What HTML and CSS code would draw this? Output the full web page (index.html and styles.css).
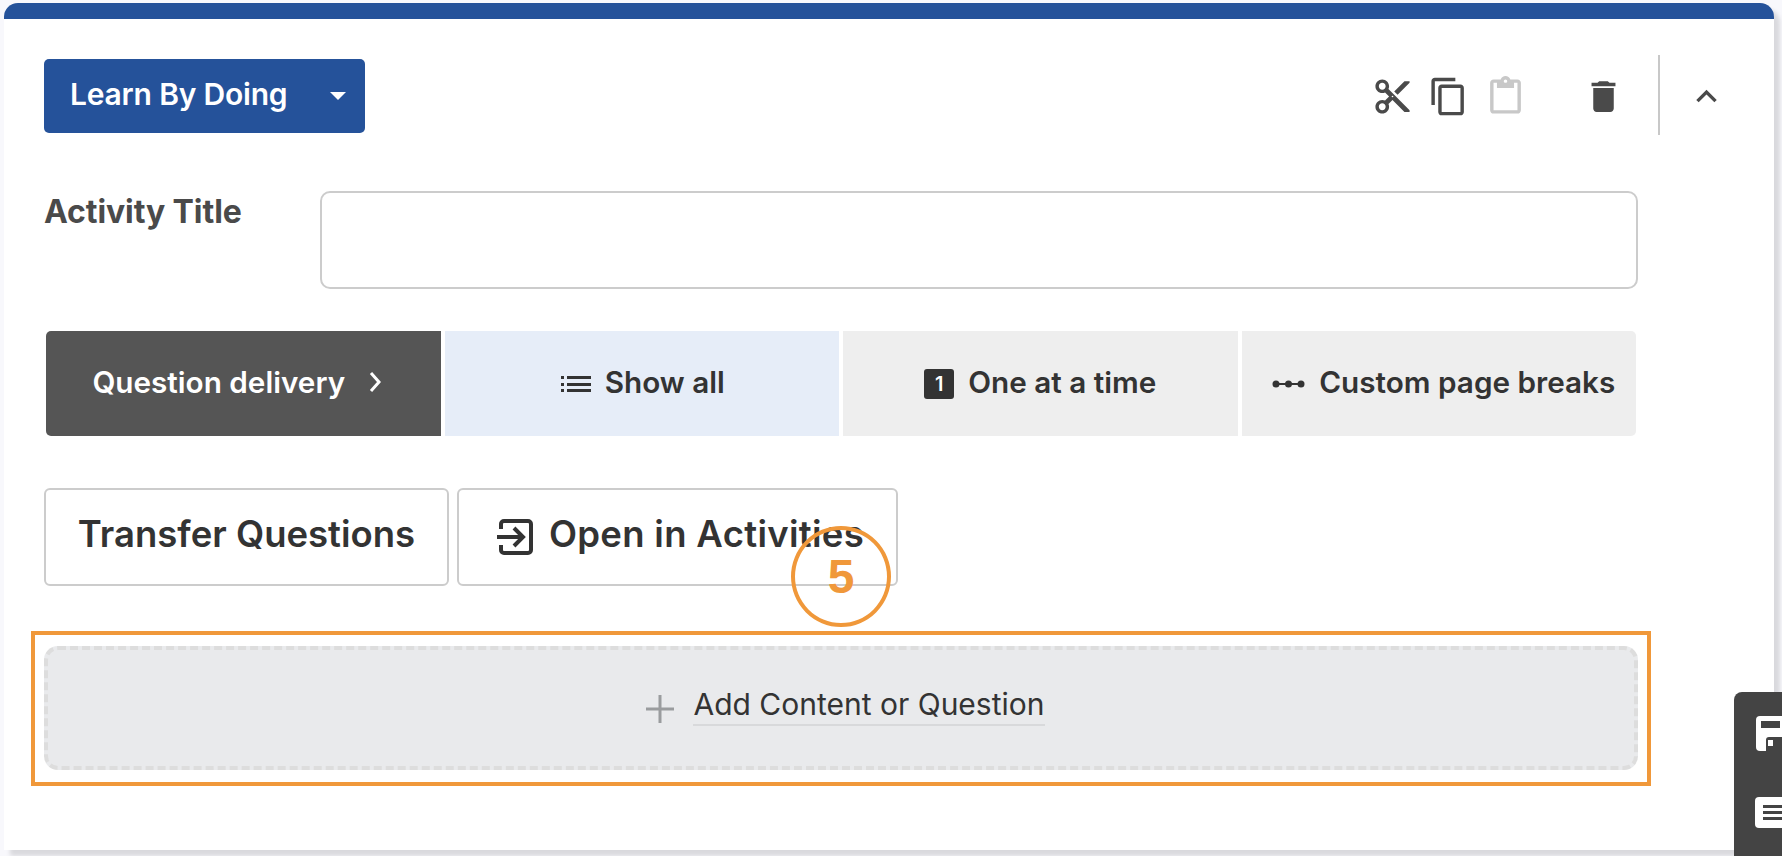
FILE: index.html
```html
<!DOCTYPE html>
<html lang="en">
  <head>
    <meta charset="UTF-8" />
    <meta name="viewport" content="width=device-width, initial-scale=1.0" />
    <title>Learn By Doing</title>
    <link rel="stylesheet" href="styles.css">
  </head>
  <body>
    <div class="card">
      <div class="card-header">
        <button class="type-btn" type="button">Learn By Doing<span class="caret"></span></button>
        <div class="tools">
          <svg class="tool tool-cut" viewBox="0 0 24 24"><path d="M9.64 7.64c.23-.5.36-1.05.36-1.64 0-2.21-1.79-4-4-4S2 3.79 2 6s1.79 4 4 4c.59 0 1.14-.13 1.64-.36L10 12l-2.36 2.36C7.14 14.13 6.59 14 6 14c-2.21 0-4 1.79-4 4s1.79 4 4 4 4-1.79 4-4c0-.59-.13-1.14-.36-1.64L12 14l7 7h3v-1L9.64 7.64zM6 8c-1.1 0-2-.89-2-2s.9-2 2-2 2 .89 2 2-.9 2-2 2zm0 12c-1.1 0-2-.89-2-2s.9-2 2-2 2 .89 2 2-.9 2-2 2zm6-7.5c-.28 0-.5-.22-.5-.5s.22-.5.5-.5.5.22.5.5-.22.5-.5.5zM19 3l-6 6 2 2 7-7V3z"/></svg>
          <svg class="tool tool-copy" viewBox="0 0 24 24"><path d="M16 1H4c-1.1 0-2 .9-2 2v14h2V3h12V1zm3 4H8c-1.1 0-2 .9-2 2v14c0 1.1.9 2 2 2h11c1.1 0 2-.9 2-2V7c0-1.1-.9-2-2-2zm0 16H8V7h11v14z"/></svg>
          <svg class="tool tool-paste" viewBox="0 0 24 24"><path d="M19 2h-4.18C14.4.84 13.3 0 12 0c-1.3 0-2.4.84-2.82 2H5c-1.1 0-2 .9-2 2v16c0 1.1.9 2 2 2h14c1.1 0 2-.9 2-2V4c0-1.1-.9-2-2-2zm-7 0c.55 0 1 .45 1 1s-.45 1-1 1-1-.45-1-1 .45-1 1-1zm7 18H5V4h2v3h10V4h2v16z"/></svg>
          <svg class="tool tool-trash" viewBox="0 0 24 24"><path d="M6 19c0 1.1.9 2 2 2h8c1.1 0 2-.9 2-2V7H6v12zM19 4h-3.5l-1-1h-5l-1 1H5v2h14V4z"/></svg>
          <div class="divider"></div>
          <svg class="tool tool-collapse" viewBox="0 0 24 24"><path d="M12 8l-6 6 1.41 1.41L12 10.83l4.59 4.58L18 14z"/></svg>
        </div>
      </div>

      <div class="title-row">
        <label class="title-label">Activity Title</label>
        <input class="title-input" type="text" />
      </div>

      <div class="delivery">
        <div class="seg seg-head">Question delivery
          <svg class="seg-chevron" viewBox="0 0 12 24"><path d="M2 3l8 9-8 9"/></svg>
        </div>
        <div class="seg seg-active">
          <svg class="seg-icon-list" viewBox="0 0 30 18">
            <rect x="0" y="1" width="3" height="3"/><rect x="0" y="8" width="3" height="3"/><rect x="0" y="14" width="3" height="3"/>
            <rect x="6" y="1" width="24" height="3"/><rect x="6" y="8" width="24" height="3"/><rect x="6" y="14" width="24" height="3"/>
          </svg>
          Show all
        </div>
        <div class="seg">
          <span class="seg-badge">1</span>
          One at a time
        </div>
        <div class="seg seg-breaks">
          <svg class="seg-icon-breaks" viewBox="0 0 33 12">
            <circle cx="4" cy="6" r="3.5"/><circle cx="16.5" cy="6" r="3.5"/><circle cx="29" cy="6" r="3.5"/>
            <rect x="4" y="5" width="25" height="2"/>
          </svg>
          Custom page breaks
        </div>
      </div>

      <div class="actions">
        <button class="action-btn btn-transfer" type="button">Transfer Questions</button>
        <button class="action-btn btn-open" type="button">
          <svg class="open-icon" viewBox="0 0 36 36"><path d="M4 10V5a3 3 0 0 1 3-3h24a3 3 0 0 1 3 3v26a3 3 0 0 1-3 3H7a3 3 0 0 1-3-3v-5M0 18h26M17 9l9 9-9 9"/></svg>
          Open in Activities
        </button>
      </div>

      <div class="add-wrap">
        <div class="add-box">
          <svg class="add-plus" viewBox="0 0 28 28"><path d="M12.5 0h3v12.5H28v3H15.5V28h-3V15.5H0v-3h12.5z"/></svg>
          <span class="add-text">Add Content or Question</span>
        </div>
        <div class="highlight"></div>
      </div>

      <div class="callout">5</div>
    </div>

    <div class="side-panel">
      <div class="side-save"><span class="save-slot"></span><span class="save-notch"><span class="save-pip"></span></span></div>
      <div class="side-list"><span></span><span></span><span></span></div>
    </div>
  </body>
</html>
```

FILE: styles.css
```css
html, body {
  margin: 0;
  height: 856px;
  overflow: hidden;
}
body {
  background: #f8f8fc;
  font-family: Inter, "Open Sans", sans-serif;
  color: #333;
  position: relative;
}
.card {
  position: relative;
  box-sizing: border-box;
  width: 1770px;
  height: 847px;
  margin: 3px 0 0 4px;
  padding: 0 136px 0 40px;
  background: #fff;
  border-top: 16px solid #25529a;
  border-radius: 14px 14px 0 0;
  box-shadow: 6px 6px 4px rgba(0, 0, 0, 0.12);
}
.card-header {
  display: flex;
  align-items: center;
  justify-content: space-between;
  height: 82px;
  margin-right: -96px;
  padding-top: 36px;
}
.type-btn {
  display: flex;
  align-items: center;
  justify-content: space-between;
  box-sizing: border-box;
  width: 321px;
  height: 74px;
  padding: 0 19px 4px 26px;
  background: #25529a;
  color: #fff;
  border: none;
  border-radius: 5px;
  font-family: inherit;
  font-size: 30px;
  font-weight: 600;
  letter-spacing: -0.2px;
}
.caret {
  width: 0;
  height: 0;
  margin-top: 4px;
  border-left: 8px solid transparent;
  border-right: 8px solid transparent;
  border-top: 8px solid #fff;
}
.tools {
  display: flex;
  align-items: center;
  margin-right: 7px;
}
.tool {
  width: 41px;
  height: 41px;
  fill: #4a4a4a;
}
.tool-copy { margin-left: 15px; }
.tool-paste { margin-left: 16px; fill: #c8c8c8; }
.tool-trash { margin-left: 57px; }
.tool-collapse { margin-left: 26px; }
.divider {
  width: 2px;
  height: 80px;
  margin: 0 0 2px 34px;
  background: #c8c8c8;
}
.title-row {
  display: flex;
  margin-top: 54px;
}
.title-label {
  width: 277px;
  padding-top: 1px;
  font-size: 32px;
  font-weight: 700;
  line-height: 40px;
  letter-spacing: -0.1px;
  color: #4a4a4a;
}
.title-input {
  box-sizing: border-box;
  width: 1318px;
  height: 98px;
  margin-left: -1px;
  border: 2px solid #ccc;
  border-radius: 10px;
  outline: none;
}
.delivery {
  display: grid;
  grid-template-columns: repeat(4, 1fr);
  gap: 4px;
  height: 105px;
  margin: 42px 2px 0 2px;
}
.seg {
  display: flex;
  align-items: center;
  justify-content: center;
  gap: 14px;
  padding-bottom: 4px;
  background: #eee;
  font-size: 29.7px;
  font-weight: 600;
  color: #333;
}
.seg-breaks {
  padding-left: 10px;
  border-radius: 0 5px 5px 0;
}
.seg-head {
  gap: 24px;
  padding-right: 13px;
  background: #555;
  color: #fff;
  border-radius: 5px 0 0 5px;
}
.seg-active {
  padding-left: 2px;
  background: #e6edf8;
}
.seg-chevron {
  width: 12px;
  height: 24px;
  fill: none;
  stroke: #fff;
  stroke-width: 3;
}
.seg-icon-list {
  width: 30px;
  height: 18px;
  margin-top: 4px;
  fill: #333;
}
.seg-badge {
  display: flex;
  align-items: center;
  justify-content: center;
  width: 30px;
  height: 30px;
  margin-top: 4px;
  background: #333;
  color: #fff;
  border-radius: 3px;
  font-size: 20px;
}
.seg-icon-breaks {
  width: 33px;
  height: 12px;
  margin-top: 4px;
  fill: #333;
}
.actions {
  display: flex;
  gap: 8px;
  margin-top: 52px;
}
.action-btn {
  display: flex;
  align-items: center;
  justify-content: center;
  box-sizing: border-box;
  height: 98px;
  padding: 0 0 6px;
  background: #fff;
  border: 2px solid #ccc;
  border-radius: 6px;
  font-family: inherit;
  font-size: 36.5px;
  font-weight: 600;
  color: #333;
}
.btn-transfer { width: 405px; }
.btn-open {
  width: 441px;
  padding-left: 6px;
  gap: 16px;
  letter-spacing: 0.3px;
}
.open-icon {
  width: 36px;
  height: 36px;
  margin-top: 6px;
  fill: none;
  stroke: #333;
  stroke-width: 4;
}
.add-wrap {
  position: relative;
  margin-top: 60px;
}
.add-box {
  display: flex;
  align-items: center;
  justify-content: center;
  gap: 19px;
  box-sizing: border-box;
  height: 124px;
  padding: 0 0 5px 9px;
  background: #e9eaec;
  border: 4px dashed #ddd;
  border-radius: 14px;
}
.add-plus {
  width: 28px;
  height: 28px;
  margin-top: 6px;
  fill: #9a9c9e;
}
.add-text {
  padding-bottom: 2px;
  border-bottom: 2px solid #d8d9db;
  font-size: 30px;
  color: #333;
}
/* orange annotation drawn over the page */
.highlight {
  position: absolute;
  top: -15px;
  left: -13px;
  width: 1612px;
  height: 147px;
  border: 4px solid #f0983a;
}
.callout {
  position: absolute;
  top: 507px;
  left: 787px;
  box-sizing: border-box;
  display: flex;
  align-items: center;
  justify-content: center;
  width: 100px;
  height: 101px;
  border: 4px solid #f0983a;
  border-radius: 50%;
  font-family: "Liberation Sans", sans-serif;
  font-size: 48px;
  font-weight: 700;
  color: #f0983a;
}
.side-panel {
  position: absolute;
  top: 692px;
  left: 1734px;
  width: 60px;
  height: 164px;
  background: #444;
  border-radius: 8px 0 0 0;
}
.side-save {
  position: absolute;
  top: 24px;
  left: 22px;
  width: 36px;
  height: 35px;
  background: #fff;
  border-radius: 4px;
}
.save-slot {
  position: absolute;
  top: 5px;
  left: 5px;
  width: 19px;
  height: 7px;
  background: #444;
}
.save-notch {
  position: absolute;
  top: 21px;
  left: 10px;
  width: 26px;
  height: 14px;
  background: #444;
  border-radius: 3px 0 0 0;
}
.save-pip {
  position: absolute;
  top: 3px;
  left: 2px;
  width: 5px;
  height: 6px;
  background: #fff;
}
.side-list {
  position: absolute;
  top: 105px;
  left: 21px;
  display: flex;
  flex-direction: column;
  gap: 3px;
  box-sizing: border-box;
  width: 36px;
  height: 31px;
  padding: 8px 0 0 8px;
  background: #fff;
  border-radius: 4px;
}
.side-list span {
  height: 3px;
  background: #444;
}
```
